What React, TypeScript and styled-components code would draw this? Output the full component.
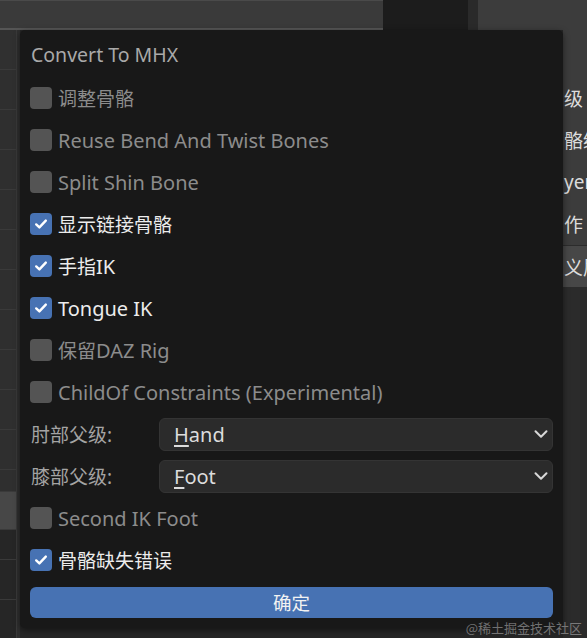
import React from "react";
import styled, { createGlobalStyle } from "styled-components";
import { ChevronDown } from "lucide-react";

const Global = createGlobalStyle`
  html, body { margin: 0; padding: 0; background: #2a2a2a; }
  body { font-family: "Noto Sans", "Noto Sans CJK SC", sans-serif; }
  * { box-sizing: border-box; }
`;

const Screen = styled.div`
  position: relative;
  width: 587px;
  height: 638px;
  overflow: hidden;
  background: #2a2a2a;
  display: grid;
  grid-template-columns: 20px 1fr 24px;
  grid-template-rows: 30px 1fr;
`;

const TopBar = styled.div`
  grid-column: 1 / 4;
  display: grid;
  grid-template-columns: 383px 85px 10px 1fr;
`;

const TopSeg = styled.div<{ $bg: string; $line?: boolean }>`
  background: ${(p) => p.$bg};
  border-top: ${(p) => (p.$line ? "1px solid #4a4a4a" : "none")};
  border-bottom: ${(p) => (p.$line ? "2px solid #555" : "none")};
`;

const LeftStrip = styled.div`
  display: flex;
  flex-direction: column;
  background: #2f2f2f;
`;

const GridCell = styled.div<{ $h: number; $bg: string }>`
  height: ${(p) => p.$h}px;
  background: ${(p) => p.$bg};
  border-bottom: 1px solid #3a3a3a;
  border-right: 1px solid #3a3a3a;
  width: 17px;
`;

const Middle = styled.div`
  background: #262626;
`;

const RightStrip = styled.div`
  display: flex;
  flex-direction: column;
  background: #2b2b2b;
`;

const RightPanel = styled.div`
  background: #3c3c3c;
  padding-top: 47px;
  display: flex;
  flex-direction: column;
`;

const RightItem = styled.div<{ $box?: boolean }>`
  height: 42px;
  display: flex;
  align-items: center;
  white-space: nowrap;
  overflow: hidden;
  font-size: 19px;
  color: #dcdcdc;
  padding-left: 1px;
  background: ${(p) => (p.$box ? "#474747" : "transparent")};
  border-top: ${(p) => (p.$box ? "1px solid #2c2c2c" : "none")};
`;

const Popup = styled.div`
  position: absolute;
  left: 20px;
  top: 30px;
  width: 543px;
  height: 598px;
  background: #181818;
  border-radius: 5px;
  box-shadow: 0 2px 6px rgba(0, 0, 0, 0.5);
  padding: 10px 10px 5px 10px;
  display: flex;
  flex-direction: column;
`;

const Title = styled.div`
  height: 30px;
  line-height: 30px;
  margin-bottom: 7px;
  padding-left: 1px;
  font-size: 19.5px;
  color: #a9a9a9;
`;

const Row = styled.div`
  height: 42px;
  display: flex;
  align-items: center;
`;

const Box = styled.div<{ $on: boolean }>`
  width: 22px;
  height: 22px;
  border-radius: 4px;
  background: ${(p) => (p.$on ? "#4772b3" : "#545454")};
  display: flex;
  align-items: center;
  justify-content: center;
  flex-shrink: 0;
`;

const Label = styled.span<{ $on: boolean }>`
  margin-left: 6px;
  font-size: 20px;
  color: ${(p) => (p.$on ? "#ececec" : "#8c8c8c")};
  white-space: nowrap;
`;

const Cjk = styled.span`
  font-size: 19px;
`;

const FieldLabel = styled.span`
  width: 129px;
  padding-left: 1px;
  font-size: 19px;
  color: #a4a4a4;
  flex-shrink: 0;
`;

const Select = styled.div`
  flex: 1;
  height: 33px;
  background: #2b2b2b;
  border: 1px solid #343434;
  border-radius: 6px;
  display: flex;
  align-items: center;
  justify-content: space-between;
  padding: 0 0 0 14px;
  font-size: 20px;
  color: #dcdcdc;
`;

const Mnemonic = styled.span`
  text-decoration: underline;
  text-decoration-thickness: 2px;
  text-underline-offset: 3px;
`;

const ButtonRow = styled.div`
  height: 42px;
  display: flex;
  align-items: center;
`;

const OkButton = styled.div`
  flex: 1;
  height: 31px;
  background: #4772b3;
  border-radius: 6px;
  display: flex;
  align-items: center;
  justify-content: center;
  font-size: 18.5px;
  color: #f2f2f2;
`;

const Watermark = styled.div`
  position: absolute;
  right: 5px;
  bottom: 1px;
  font-size: 13px;
  color: rgba(200, 200, 200, 0.5);
  font-family: "Noto Sans CJK SC", serif;
`;

const Check = () => (
  <svg width="16" height="16" viewBox="0 0 16 16">
    <path
      d="M3.2 8.4 L6.4 11.4 L12.8 4.6"
      fill="none"
      stroke="#ffffff"
      strokeWidth="2.4"
      strokeLinecap="round"
      strokeLinejoin="round"
    />
  </svg>
);

const Mixed = ({ text }: { text: string }) => (
  <>
    {text
      .split(/([\u4e00-\u9fff]+)/)
      .filter((s) => s.length > 0)
      .map((s, i) =>
        /[\u4e00-\u9fff]/.test(s) ? <Cjk key={i}>{s}</Cjk> : <span key={i}>{s}</span>
      )}
  </>
);

const CheckRow = ({ on, text }: { on: boolean; text: string }) => (
  <Row>
    <Box $on={on}>{on && <Check />}</Box>
    <Label $on={on}>
      <Mixed text={text} />
    </Label>
  </Row>
);

const SelectRow = ({ label, value }: { label: string; value: string }) => (
  <Row>
    <FieldLabel>{label}</FieldLabel>
    <Select>
      <span>
        <Mnemonic>{value[0]}</Mnemonic>
        {value.slice(1)}
      </span>
      <ChevronDown size={22} color="#d8d8d8" strokeWidth={2.2} />
    </Select>
  </Row>
);

const leftCells: [number, string][] = [
  [40, "#303030"],
  [40, "#2f2f2f"],
  [40, "#2f2f2f"],
  [40, "#2f2f2f"],
  [40, "#2f2f2f"],
  [40, "#2f2f2f"],
  [40, "#2f2f2f"],
  [40, "#2f2f2f"],
  [40, "#2f2f2f"],
  [40, "#2f2f2f"],
  [40, "#2f2f2f"],
  [22, "#2f2f2f"],
  [38, "#474747"],
  [30, "#262626"],
  [40, "#262626"],
  [40, "#262626"],
];

export default function App() {
  return (
    <>
      <Global />
      <Screen>
        <TopBar>
          <TopSeg $bg="#3a3a3a" $line />
          <TopSeg $bg="#1c1c1c" />
          <TopSeg $bg="#2a2a2a" />
          <TopSeg $bg="#3c3c3c" />
        </TopBar>
        <LeftStrip>
          {leftCells.map(([h, bg], i) => (
            <GridCell key={i} $h={h} $bg={bg} />
          ))}
        </LeftStrip>
        <Middle />
        <RightStrip>
          <RightPanel>
            <RightItem>级</RightItem>
            <RightItem>骼级</RightItem>
            <RightItem>yer</RightItem>
            <RightItem>作</RightItem>
            <RightItem $box>义屌</RightItem>
          </RightPanel>
        </RightStrip>

        <Popup>
          <Title>Convert To MHX</Title>
          <CheckRow on={false} text="调整骨骼" />
          <CheckRow on={false} text="Reuse Bend And Twist Bones" />
          <CheckRow on={false} text="Split Shin Bone" />
          <CheckRow on={true} text="显示链接骨骼" />
          <CheckRow on={true} text="手指IK" />
          <CheckRow on={true} text="Tongue IK" />
          <CheckRow on={false} text="保留DAZ Rig" />
          <CheckRow on={false} text="ChildOf Constraints (Experimental)" />
          <SelectRow label="肘部父级:" value="Hand" />
          <SelectRow label="膝部父级:" value="Foot" />
          <CheckRow on={false} text="Second IK Foot" />
          <CheckRow on={true} text="骨骼缺失错误" />
          <ButtonRow>
            <OkButton>确定</OkButton>
          </ButtonRow>
        </Popup>
        <Watermark>@稀土掘金技术社区</Watermark>
      </Screen>
    </>
  );
}
